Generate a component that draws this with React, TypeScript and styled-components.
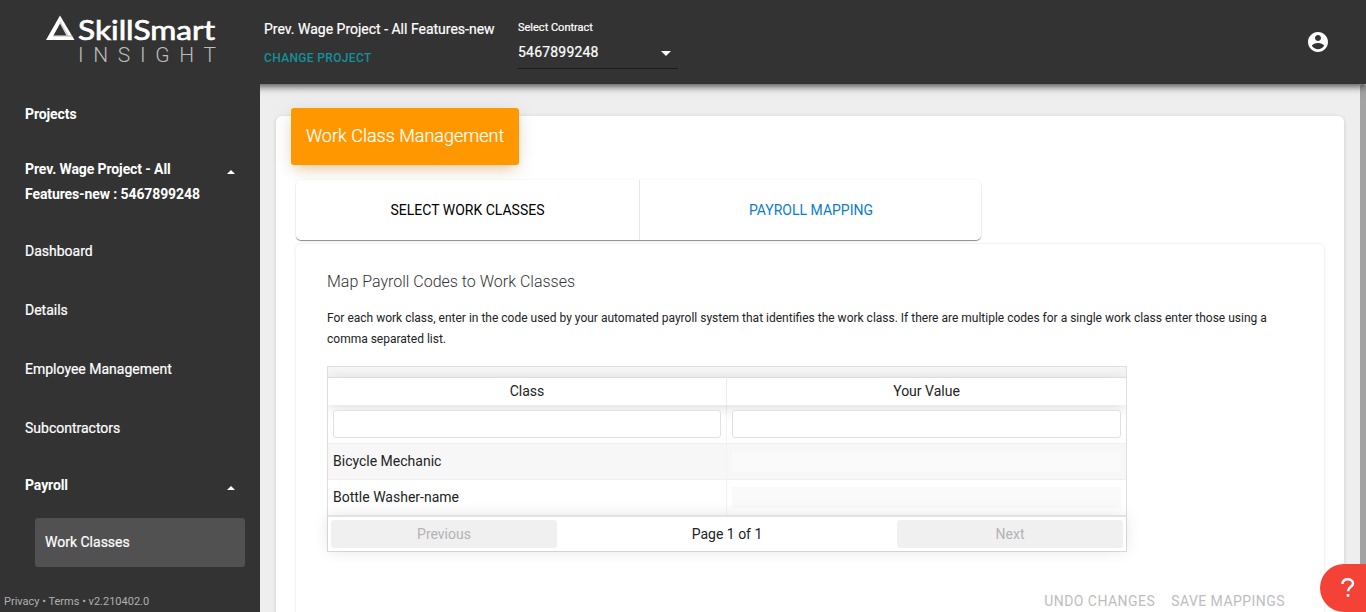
import React from 'react';
import styled, { createGlobalStyle } from 'styled-components';

const GlobalStyle = createGlobalStyle`
  * { box-sizing: border-box; }
  body { margin: 0; background: #eee; font-family: Roboto, "Liberation Sans", sans-serif; overflow: hidden; }
  button, input { font-family: inherit; }
`;

const Page = styled.div`
  display: flex;
  flex-direction: column;
  height: 612px;
  overflow: hidden;
`;

const Header = styled.header`
  display: flex;
  flex: 0 0 84px;
  z-index: 2;
  background: #333;
  color: #fff;
  box-shadow: 0 2px 8px rgba(0, 0, 0, 0.75);
`;

const LogoArea = styled.div`
  width: 264px;
  padding: 14px 0 0 44px;
`;

const ProjectInfo = styled.div`
  width: 254px;
  padding-top: 19px;
  font-size: 14px;
  font-weight: 400;
  line-height: 20px;
  -webkit-text-stroke: 0.2px #fff;
`;

const ChangeLink = styled.div`
  margin-top: 9px;
  font-size: 12px;
  font-weight: 500;
  letter-spacing: 0.35px;
  color: #13919b;
  -webkit-text-stroke: 0;
`;

const ContractField = styled.div`
  width: 160px;
  height: 69px;
  padding-top: 21px;
  border-bottom: 1px solid #1b1b1b;
  -webkit-text-stroke: 0.2px #fff;
`;

const FieldLabel = styled.div`
  font-size: 11px;
  font-weight: 400;
  line-height: 14px;
`;

const FieldValue = styled.div`
  display: flex;
  align-items: flex-start;
  justify-content: space-between;
  height: 34px;
  padding: 7px 7px 0 0;
  font-size: 14px;
  font-weight: 400;
  line-height: 20px;
  letter-spacing: 0.2px;
`;

const Caret = styled.span<{ $up?: boolean; $size: number }>`
  border: ${p => p.$size}px solid transparent;
  ${p => (p.$up ? 'border-bottom-color: #fff; border-top: 0;' : 'border-top-color: #fff; border-bottom: 0;')}
`;

const SelectCaret = styled(Caret)`
  margin-top: 9px;
`;

const AccountButton = styled.div`
  margin: 30px 36px 0 auto;
  height: 24px;
`;

const Body = styled.div`
  display: flex;
  flex: 1;
  min-height: 0;
`;

const Sidebar = styled.nav`
  display: flex;
  flex-direction: column;
  flex: 0 0 260px;
  z-index: 3;
  background: #333;
  color: #fff;
  font-size: 14px;
`;

const NavItem = styled.div<{ $height: number; $bold?: boolean }>`
  display: flex;
  align-items: center;
  justify-content: space-between;
  flex: 0 0 ${p => p.$height}px;
  padding: 0 25px;
  font-weight: ${p => (p.$bold ? 700 : 400)};
  line-height: 25px;
  letter-spacing: ${p => (p.$bold ? '-0.1px' : '0')};
  -webkit-text-stroke: ${p => (p.$bold ? '0' : '0.2px #fff')};
`;

const NavLinks = styled.div`
  display: flex;
  flex-direction: column;
  padding: 2px 0 0;
  margin-bottom: -2px;
`;

const GroupLabel = styled.span`
  width: 190px;
`;

const GroupCaret = styled.span<{ $offset: number }>`
  display: flex;
  align-self: flex-start;
  padding-top: ${p => p.$offset}px;
`;

const SubItem = styled.div`
  flex: 0 0 49px;
  margin: 4px 15px 0 35px;
  padding-left: 10px;
  border-radius: 3px;
  background: #515151;
  font-weight: 400;
  line-height: 49px;
  -webkit-text-stroke: 0.2px #fff;
`;

const Legal = styled.div`
  margin-top: auto;
  padding: 0 4px;
  height: 21px;
  font-size: 11px;
  line-height: 22px;
  color: #b0b0b0;
`;

const Main = styled.main`
  display: flex;
  flex: 1;
  padding: 32px 0 0 16px;
`;

const Card = styled.section`
  flex: 1;
  height: 620px;
  padding: 0 20px;
  border-radius: 6px;
  background: #fff;
  box-shadow: 0 1px 4px rgba(0, 0, 0, 0.14);
`;

const CardTitle = styled.h1`
  width: 228px;
  height: 57px;
  margin: -8px 0 15px -5px;
  padding-left: 15px;
  border-radius: 3px;
  background: #ff9800;
  box-shadow: 0 4px 20px rgba(0, 0, 0, 0.1), 0 7px 12px -5px rgba(255, 152, 0, 0.4);
  color: #fff;
  font-size: 18px;
  font-weight: 300;
  line-height: 55px;
  white-space: nowrap;
  -webkit-text-stroke: 0.2px #fff;
`;

const Tabs = styled.div`
  display: flex;
  width: 685px;
  height: 60px;
  border-radius: 5px;
  background: rgba(255, 255, 255, 0.7);
  box-shadow: 0 1px 1px rgba(0, 0, 0, 0.45), 0 0 2px rgba(0, 0, 0, 0.08);
`;

const Tab = styled.div<{ $active?: boolean }>`
  flex: 0 0 ${p => (p.$active ? 342 : 344)}px;
  border-right: ${p => (p.$active ? '0' : '1px solid #e8e8e8')};
  color: ${p => (p.$active ? '#0c7cc9' : '#000')};
  font-size: 14px;
  line-height: 60px;
  text-align: center;
`;

const Panel = styled.div`
  height: 500px;
  margin-top: 4px;
  padding: 28px 31px;
  border-radius: 5px;
  box-shadow: 0 0 3px rgba(0, 0, 0, 0.12);
`;

const PanelTitle = styled.h2`
  margin: 0 0 16px;
  color: #333;
  font-size: 16px;
  font-weight: 300;
  line-height: 20px;
`;

const Description = styled.p`
  margin: 0 0 16px;
  color: #222;
  font-size: 12px;
  line-height: 21px;
`;

const Table = styled.div`
  width: 800px;
  height: 186px;
  border: 1px solid #dedede;
  color: #222;
  font-size: 14px;
`;

const Clip = styled.div`
  height: 148px;
  overflow: hidden;
`;

const GroupBand = styled.div`
  height: 10px;
  background: #f7f7f7;
`;

const Row = styled.div<{ $height: number; $striped?: boolean }>`
  display: grid;
  grid-template-columns: 399px 399px;
  height: ${p => p.$height}px;
  background: ${p => (p.$striped ? '#f7f7f7' : 'transparent')};
  border-bottom: 1px solid #f0f0f0;
`;

const HeadRow = styled(Row)`
  position: relative;
  background: #fff;
  border-top: 1px solid #ddd;
  border-bottom: 0;
  box-shadow: 0 2px 15px rgba(0, 0, 0, 0.15);
  line-height: 27px;
  text-align: center;
`;

const Cell = styled.div`
  display: flex;
  align-items: center;
  padding: 0 5px;
  &:first-child { border-right: 1px solid #f2f2f2; }
`;

const NameCell = styled(Cell)`
  padding-bottom: 2px;
`;

const FilterCell = styled(Cell)`
  align-items: flex-start;
  padding-top: 5px;
`;

const HeadCell = styled.div`
  &:first-child { border-right: 1px solid #ececec; }
`;

const FilterInput = styled.input`
  z-index: 1;
  width: 100%;
  height: 28px;
  border: 1px solid #e1e1e1;
  border-radius: 3px;
  background: #fff;
`;

const EditableValue = styled.div`
  width: 100%;
  height: 21px;
  background: #fafafa;
`;

const Pager = styled.div`
  display: grid;
  grid-template-columns: 226px 1fr 226px;
  position: relative;
  height: 36px;
  padding: 3px;
  border-top: 2px solid #e2e2e2;
  background: #fff;
  box-shadow: 0 0 15px rgba(0, 0, 0, 0.1);
  line-height: 28px;
  text-align: center;
`;

const PageButton = styled.button`
  height: 28px;
  padding: 0;
  border: 0;
  border-radius: 3px;
  background: #f0f0f0;
  color: #b3b3b3;
  font-size: 14px;
`;

const Actions = styled.div`
  display: flex;
  justify-content: flex-end;
  gap: 16px;
  padding: 39px 8px 0 0;
  color: #bdbdbd;
  font-size: 14px;
  line-height: 20px;
  letter-spacing: 0.45px;
`;

const Scrollbar = styled.div`
  width: 6px;
  margin: -32px 0 0 16px;
  border-radius: 3px 3px 0 0;
  background: #a2a2a2;
`;

const HelpButton = styled.div`
  position: fixed;
  right: 0;
  bottom: 0;
  z-index: 5;
  display: flex;
  align-items: center;
  width: 46px;
  height: 48px;
  padding-left: 20px;
  border-radius: 24px 0 0 24px;
  background: #f44336;
`;

const LogoLockup = styled.div`
  display: flex;
  color: #fff;
`;

const LogoWords = styled.div`
  display: flex;
  flex-direction: column;
  margin-left: 3px;
  svg { overflow: visible; }
`;

const Logo = () => (
  <LogoLockup>
    <svg width="31" height="28" viewBox="44 14 31 28" fill="#fff">
      <path d="M60 15.5 74.5 40H46ZM60 23.5 53.5 35.6H66.5Z" fillRule="evenodd" />
      <path d="M60 22 68 36M53 36H74" stroke="#777" strokeWidth=".5" />
    </svg>
    <LogoWords>
      <svg width="140" height="29" viewBox="78 14 140 29" fill="#fff">
        <text x="78" y="40" fontFamily="Lato" fontSize="27" fontWeight="400" stroke="#fff" strokeWidth=".7" textLength="137" lengthAdjust="spacingAndGlyphs">SkillSmart</text>
      </svg>
      <svg width="140" height="22" viewBox="78 43 140 22" fill="#bdbdbd">
        <text x="78" y="62" fontFamily="Roboto" fontSize="21" fontWeight="300" textLength="138">INSIGHT</text>
      </svg>
    </LogoWords>
  </LogoLockup>
);

const NAV = ['Dashboard', 'Details', 'Employee Management', 'Subcontractors'];
const CLASSES = ['Bicycle Mechanic', 'Bottle Washer-name'];

export default function App() {
  return (
    <Page>
      <GlobalStyle />
      <Header>
        <LogoArea><Logo /></LogoArea>
        <ProjectInfo>
          Prev. Wage Project - All Features-new
          <ChangeLink>CHANGE PROJECT</ChangeLink>
        </ProjectInfo>
        <ContractField>
          <FieldLabel>Select Contract</FieldLabel>
          <FieldValue>5467899248<SelectCaret $size={5} /></FieldValue>
        </ContractField>
        <AccountButton>
          <svg width="24" height="24" viewBox="0 0 24 24" fill="#fff">
            <path d="M12 2C6.48 2 2 6.48 2 12s4.48 10 10 10 10-4.48 10-10S17.52 2 12 2zm0 3c1.66 0 3 1.34 3 3s-1.34 3-3 3-3-1.34-3-3 1.34-3 3-3zm0 14.2c-2.5 0-4.71-1.28-6-3.22.03-1.99 4-3.08 6-3.08 1.99 0 5.97 1.09 6 3.08-1.29 1.94-3.5 3.22-6 3.22z" />
          </svg>
        </AccountButton>
      </Header>
      <Body>
        <Sidebar>
          <NavItem $height={60} $bold>Projects</NavItem>
          <NavItem $height={76} $bold>
            <GroupLabel>Prev. Wage Project - All Features-new : 5467899248</GroupLabel>
            <GroupCaret $offset={26}><Caret $up $size={4} /></GroupCaret>
          </NavItem>
          <NavLinks>
            {NAV.map(label => <NavItem key={label} $height={59}>{label}</NavItem>)}
          </NavLinks>
          <NavItem $height={58} $bold>
            Payroll
            <GroupCaret $offset={30}><Caret $up $size={4} /></GroupCaret>
          </NavItem>
          <SubItem>Work Classes</SubItem>
          <Legal>Privacy • Terms • v2.210402.0</Legal>
        </Sidebar>
        <Main>
          <Card>
            <CardTitle>Work Class Management</CardTitle>
            <Tabs>
              <Tab>SELECT WORK CLASSES</Tab>
              <Tab $active>PAYROLL MAPPING</Tab>
            </Tabs>
            <Panel>
              <PanelTitle>Map Payroll Codes to Work Classes</PanelTitle>
              <Description>
                For each work class, enter in the code used by your automated payroll system that identifies the work class. If there are multiple codes for a single work class enter those using a comma separated list.
              </Description>
              <Table>
                <Clip>
                  <GroupBand />
                  <HeadRow $height={28}>
                    <HeadCell>Class</HeadCell>
                    <HeadCell>Your Value</HeadCell>
                  </HeadRow>
                  <Row $height={39}>
                    <FilterCell><FilterInput /></FilterCell>
                    <FilterCell><FilterInput /></FilterCell>
                  </Row>
                  {CLASSES.map((name, i) => (
                    <Row key={name} $height={36} $striped={i % 2 === 0}>
                      <NameCell>{name}</NameCell>
                      <Cell><EditableValue /></Cell>
                    </Row>
                  ))}
                </Clip>
                <Pager>
                  <PageButton>Previous</PageButton>
                  <span>Page 1 of 1</span>
                  <PageButton>Next</PageButton>
                </Pager>
              </Table>
              <Actions>
                <span>UNDO CHANGES</span>
                <span>SAVE MAPPINGS</span>
              </Actions>
            </Panel>
          </Card>
          <Scrollbar />
        </Main>
      </Body>
      <HelpButton>
        <svg width="16" height="22" viewBox="0 0 16 22" fill="none" stroke="#fff" strokeWidth="2.5">
          <path d="M2.4 7C2.4 3.9 4.6 2.3 7.6 2.3S13 3.9 13 6.4C13 9.8 8 9.6 8 14.2" />
          <path d="M8 17V19.8" />
        </svg>
      </HelpButton>
    </Page>
  );
}
